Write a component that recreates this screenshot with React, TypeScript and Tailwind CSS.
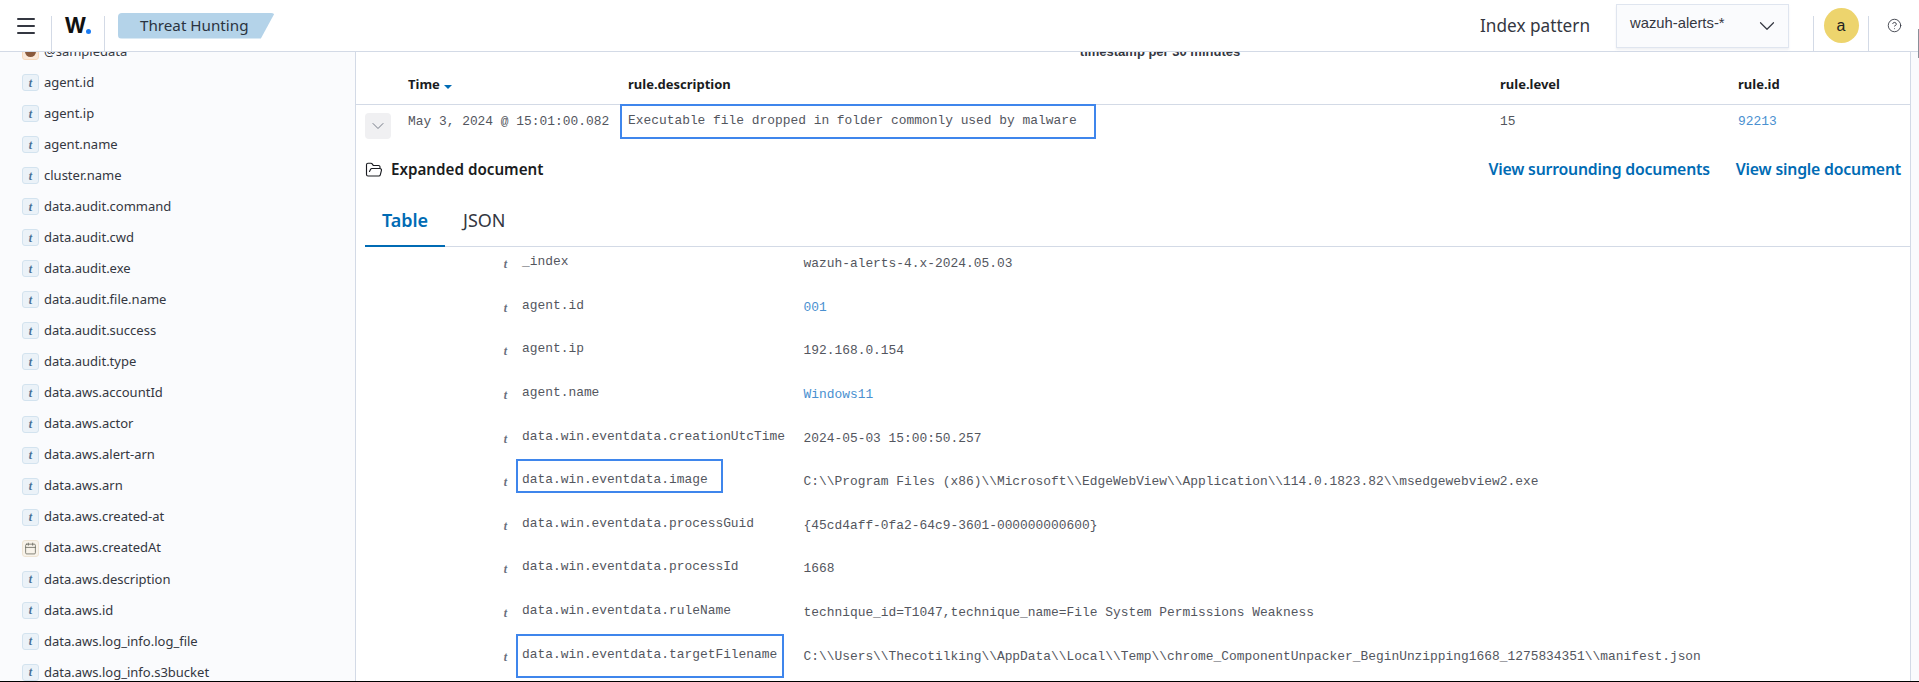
import { ChevronDown, Menu, CircleHelp, FolderOpen, Calendar } from "lucide-react";

const fields = [
  "agent.id",
  "agent.ip",
  "agent.name",
  "cluster.name",
  "data.audit.command",
  "data.audit.cwd",
  "data.audit.exe",
  "data.audit.file.name",
  "data.audit.success",
  "data.audit.type",
  "data.aws.accountId",
  "data.aws.actor",
  "data.aws.alert-arn",
  "data.aws.arn",
  "data.aws.created-at",
  "data.aws.createdAt",
  "data.aws.description",
  "data.aws.id",
  "data.aws.log_info.log_file",
  "data.aws.log_info.s3bucket",
];

const docRows = [
  { name: "_index", value: "wazuh-alerts-4.x-2024.05.03" },
  { name: "agent.id", value: "001", link: true },
  { name: "agent.ip", value: "192.168.0.154" },
  { name: "agent.name", value: "Windows11", link: true },
  { name: "data.win.eventdata.creationUtcTime", value: "2024-05-03 15:00:50.257" },
  {
    name: "data.win.eventdata.image",
    value: "C:\\\\Program Files (x86)\\\\Microsoft\\\\EdgeWebView\\\\Application\\\\114.0.1823.82\\\\msedgewebview2.exe",
    boxed: "w-[207px] h-[34px]",
  },
  { name: "data.win.eventdata.processGuid", value: "{45cd4aff-0fa2-64c9-3601-000000000600}" },
  { name: "data.win.eventdata.processId", value: "1668" },
  { name: "data.win.eventdata.ruleName", value: "technique_id=T1047,technique_name=File System Permissions Weakness" },
  {
    name: "data.win.eventdata.targetFilename",
    value: "C:\\\\Users\\\\Thecotilking\\\\AppData\\\\Local\\\\Temp\\\\chrome_ComponentUnpacker_BeginUnzipping1668_1275834351\\\\manifest.json",
    boxed: "w-[268px] h-[44px]",
  },
];

function FieldIcon({ name }: { name: string }) {
  if (name === "data.aws.createdAt") {
    return (
      <span className="flex h-[17px] w-[17px] items-center justify-center rounded-[3px] border border-[#eee4d4] bg-[#f8f3ea] text-[#6a6a60]">
        <Calendar size={13} strokeWidth={1.5} />
      </span>
    );
  }
  return (
    <span className="flex h-[17px] w-[17px] items-center justify-center rounded-[3px] border border-[#d3e3ef] bg-[#ebf2f8] font-['Liberation_Serif',serif] text-[12px] font-bold italic text-[#4a7194]">
      t
    </span>
  );
}

function FieldRow({ name }: { name: string }) {
  return (
    <div className="flex h-[31.05px] items-center gap-[5px] pl-[22px]">
      <FieldIcon name={name} />
      <span className="text-[13px] text-[#343741]">{name}</span>
    </div>
  );
}

function Sep() {
  return <span className="h-[35px] w-px shrink-0 self-end bg-[#d3dae6]" />;
}

export default function App() {
  return (
    <div className="relative flex h-[682px] flex-col overflow-hidden border-b border-black bg-white font-['Noto_Sans',sans-serif]">
      <header className="z-10 flex h-[52px] shrink-0 items-stretch border-b border-[#d3dae6] bg-white">
        <div className="flex w-[51px] items-center justify-center text-[#343741]">
          <Menu size={24} strokeWidth={2} />
        </div>
        <Sep />
        <div className="flex w-[52px] items-center justify-center">
          <span className="font-['Inter',sans-serif] text-[21px] font-bold leading-none text-[#111]">W</span>
          <span className="mt-[11px] h-[5px] w-[5px] rounded-full bg-[#1a7cf5]" />
        </div>
        <Sep />
        <div className="ml-[13px] flex items-center">
          <div className="flex h-[26px] w-[157px] items-center rounded-[4px] bg-[#b4d3e9] pl-[22px] text-[15.2px] text-[#2b3340] [clip-path:polygon(0_0,100%_0,91%_100%,0_100%)]">
            Threat Hunting
          </div>
        </div>
        <div className="ml-auto flex items-center">
          <span className="mr-[26px] text-[17.2px] text-[#343741]">Index pattern</span>
          <div className="mr-[24px] flex h-[44px] w-[173px] items-center justify-between border border-[#dfe5ef] bg-[#fafbfd] pl-[13px] pr-[8px] font-['Liberation_Sans',sans-serif] text-[14.8px] text-[#343741] shadow-[0_2px_2px_rgba(152,162,179,0.15)]">
            <span className="-mt-[5px]">wazuh-alerts-*</span>
            <ChevronDown size={26} strokeWidth={1.1} />
          </div>
        </div>
        <Sep />
        <div className="flex w-[54px] items-center justify-center">
          <div className="flex h-[35px] w-[35px] items-center justify-center rounded-full bg-[#edd46d] font-['Liberation_Sans',sans-serif] text-[16px] text-[#222]">
            a
          </div>
        </div>
        <Sep />
        <div className="flex w-[50px] items-center justify-center pb-[1px] text-[#343741]">
          <CircleHelp size={15} strokeWidth={1.4} />
        </div>
      </header>

      <div className="flex min-h-0 flex-1">
        <aside className="w-[356px] shrink-0 overflow-hidden border-r border-[#d3dae6] bg-[#fafbfd]">
          <div className="-mt-[16px]">
            <div className="flex h-[31px] items-center gap-[5px] pl-[22px]">
              <span className="flex h-[17px] w-[17px] items-center justify-center rounded-[3px] border border-[#f6d9bd] bg-[#fbe9d9]">
                <span className="h-[11px] w-[11px] rounded-full bg-[#8a5a3c]" />
              </span>
              <span className="text-[13px] text-[#343741]">@sampledata</span>
            </div>
            {fields.map((f) => (
              <FieldRow key={f} name={f} />
            ))}
          </div>
        </aside>

        <main className="min-w-0 flex-1 overflow-hidden border-r border-[#d3dae6]">
          <div className="-mt-[7px] pl-[54px] text-center font-['Liberation_Sans',sans-serif] text-[13px] font-bold leading-[14px] text-[#343741]">
            timestamp per 30 minutes
          </div>

          <div className="mt-[7px] flex h-[39px] items-center border-b border-[#d3dae6] text-[13px] font-bold text-[#1a1c21]">
            <div className="flex w-[272px] items-center gap-[4px] pl-[52px]">
              Time
              <span className="mt-[3px] h-0 w-0 border-x-[4px] border-t-[4px] border-x-transparent border-t-[#006bb4]" />
            </div>
            <div className="w-[872px]">rule.description</div>
            <div className="w-[238px]">rule.level</div>
            <div>rule.id</div>
          </div>

          <div className="flex h-[39px] font-['Liberation_Mono',monospace] text-[12.9px] text-[#53565e]">
            <div className="w-[52px] shrink-0 pl-[9px] pt-[8px]">
              <span className="flex h-[26px] w-[26px] items-center justify-center rounded-[4px] bg-[#f0f0f2] text-[#69707d]">
                <ChevronDown size={20} strokeWidth={1.1} />
              </span>
            </div>
            <div className="w-[212px] shrink-0 whitespace-nowrap pt-[9px] leading-[15px]">May 3, 2024 @ 15:01:00.082</div>
            <div className="w-[880px] shrink-0">
              <div className="-mt-[1px] h-[35px] w-[476px] whitespace-nowrap border-2 border-[#3f86ec] pl-[6px] pt-[7px] leading-[15px]">
                Executable file dropped in folder commonly used by malware
              </div>
            </div>
            <div className="w-[238px] shrink-0 pt-[9px] leading-[15px]">15</div>
            <div className="pt-[9px] leading-[15px] text-[#4a90d0]">92213</div>
          </div>

          <div className="mt-[14px] flex items-center pl-[9px] pr-[9px]">
            <FolderOpen size={18} strokeWidth={1.5} className="text-[#1a1c21]" />
            <span className="ml-[8px] text-[15.2px] font-semibold text-[#1a1c21]">Expanded document</span>
            <div className="ml-auto flex gap-[26px] text-[15.8px] font-semibold tracking-[-0.2px] text-[#006bb4]">
              <span>View surrounding documents</span>
              <span>View single document</span>
            </div>
          </div>

          <div className="ml-[9px] mt-[18px] flex border-b border-[#d3dae6] text-[18px]">
            <div className="-mb-[1px] w-[80px] border-b-2 border-[#006bb4] pb-[11px] pt-[7px] text-center font-semibold text-[#006bb4]">
              Table
            </div>
            <div className="ml-[18px] pt-[7px] text-[#343741]">JSON</div>
          </div>

          <div className="pt-[7.5px] font-['Liberation_Mono',monospace] text-[12.9px] leading-[15px] text-[#53565e]">
            {docRows.map((r) => (
              <div key={r.name} className="flex h-[43.6px] items-start">
                <span className="mt-[3px] w-[166px] shrink-0 pr-[15px] text-right font-['Liberation_Serif',serif] text-[12px] font-bold italic text-[#69707d]">
                  t
                </span>
                <div className="relative w-[281.5px] shrink-0">
                  {r.boxed && (
                    <span className={`absolute -left-[6px] -top-[13px] border-2 border-[#3f86ec] ${r.boxed}`} />
                  )}
                  {r.name}
                </div>
                <span className={`whitespace-nowrap pt-[2px] ${r.link ? "text-[#4a90d0]" : ""}`}>{r.value}</span>
              </div>
            ))}
          </div>
        </main>
        <div className="w-[8px] shrink-0 bg-[#fafbfd]" />
      </div>

      <span className="absolute right-0 top-[29px] z-20 h-[29px] w-px bg-[#8a8f99]" />
    </div>
  );
}
